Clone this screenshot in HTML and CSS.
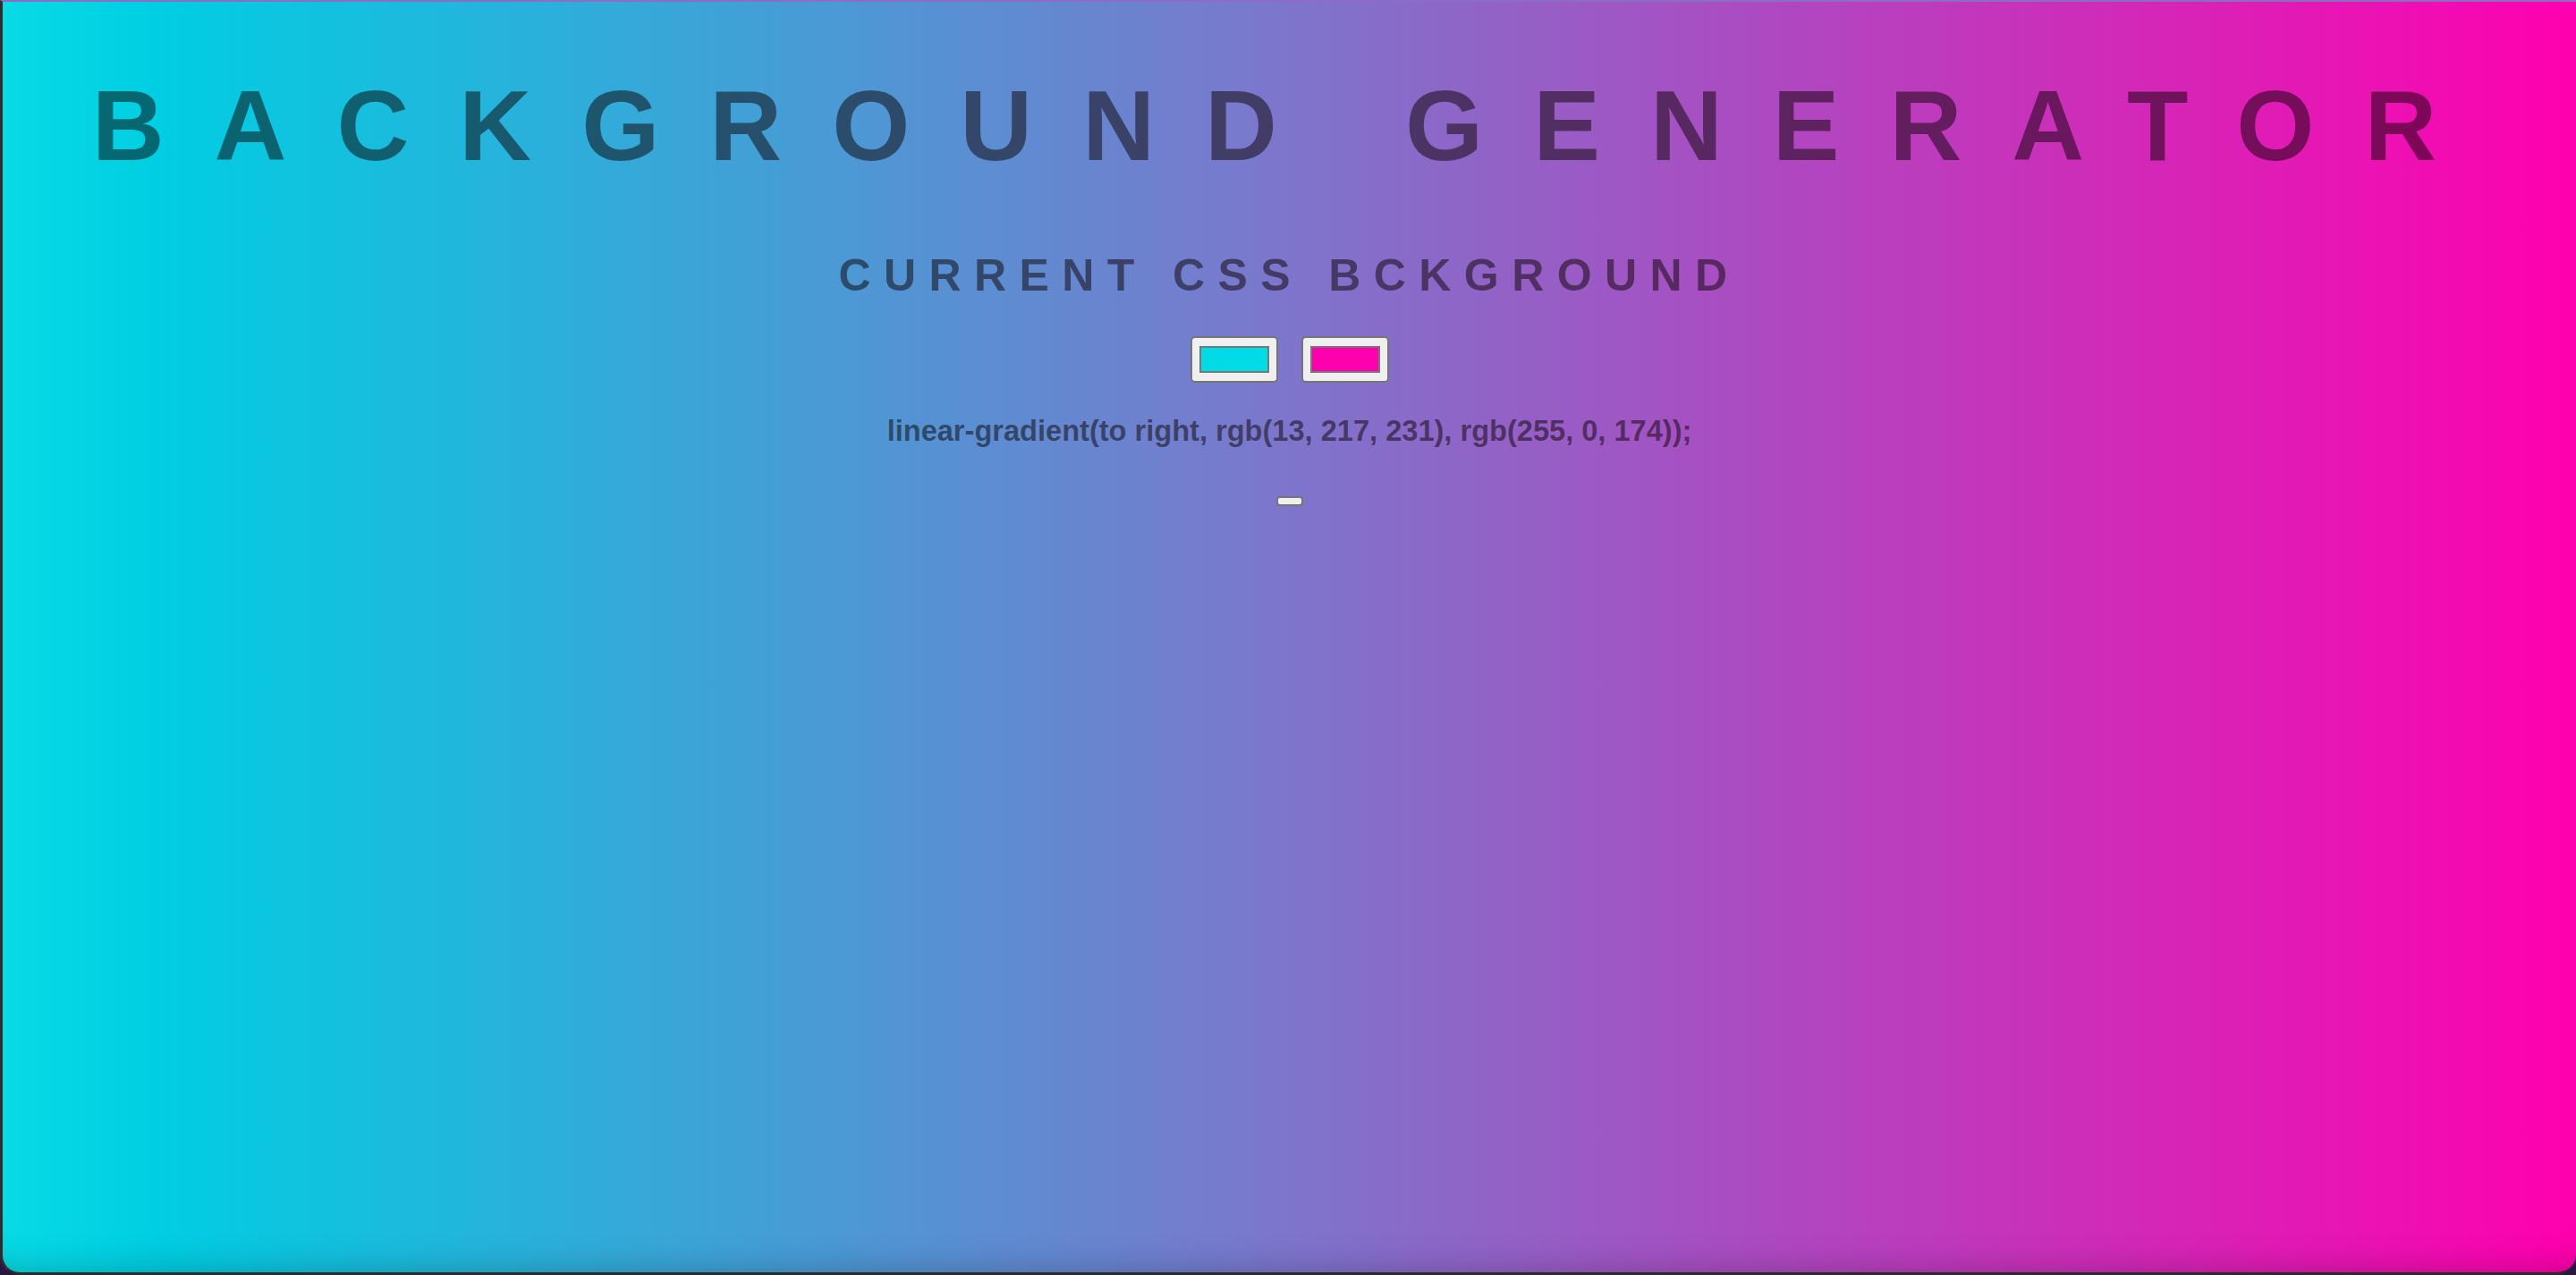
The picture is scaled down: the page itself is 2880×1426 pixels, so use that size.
FILE: index.html
```html
<!DOCTYPE html>
<html lang="en">
<head>
<meta charset="utf-8">
<title>Background Generator</title>
<link rel="stylesheet" href="styles.css">
</head>
<body>
<div class="window">
  <h1 class="title">BACKGROUND GENERATOR</h1>
  <h3 class="subtitle">CURRENT CSS BCKGROUND</h3>
  <div class="pickers">
    <span class="picker"><span class="swatch swatch-1"></span></span>
    <span class="picker"><span class="swatch swatch-2"></span></span>
  </div>
  <p class="css-output">linear-gradient(to right, rgb(13, 217, 231), rgb(255, 0, 174));</p>
  <div class="actions"><button class="random-btn" type="button"></button></div>
</div>
</body>
</html>
```
FILE: styles.css
```css
html, body {
  margin: 0;
  padding: 0;
  height: 100%;
  background: #2a1640;
}

.window {
  box-sizing: border-box;
  height: 1426px;
  border-top: 2px solid #8c6cc4;
  border-left: 3px solid #2d2d2d;
  border-bottom: 3px solid #2b2b2b;
  border-radius: 0 0 22px 22px;
  background: linear-gradient(to right, rgb(8, 218, 230) 0%, rgb(0, 206, 226) 6%, rgb(120, 122, 205) 48%, rgb(255, 0, 174) 100%);
  box-shadow: inset 0 -40px 40px -40px rgba(0, 0, 0, 0.25);
  font-family: "Liberation Sans", Arial, Helvetica, sans-serif;
  font-weight: bold;
  color: rgba(10, 0, 0, 0.5);
  text-align: center;
  display: flex;
  flex-direction: column;
  align-items: center;
  overflow: hidden;
}

.title {
  margin: 83px 0 0 0;
  font-size: 112px;
  line-height: 112px;
  letter-spacing: 56px;
  font-weight: bold;
}

.subtitle {
  margin: 86px 0 0 0;
  font-size: 50px;
  line-height: 50px;
  letter-spacing: 14.4px;
  font-weight: bold;
}

.pickers {
  margin-top: 43px;
  display: flex;
  gap: 26px;
}

.picker {
  box-sizing: border-box;
  width: 98px;
  height: 52px;
  padding: 9px 8px;
  background: #efefef;
  border: 2px solid #767676;
  border-radius: 5px;
  display: flex;
}

.swatch {
  flex: 1;
  border: 2px solid #777777;
}

.swatch-1 { background: rgb(0, 219, 230); }
.swatch-2 { background: rgb(255, 0, 174); }

.css-output {
  margin: 38px 0 0 0;
  font-size: 32.6px;
  line-height: 32.6px;
  letter-spacing: 0;
}

.actions {
  margin-top: 56px;
}

.random-btn {
  display: block;
  box-sizing: border-box;
  width: 30px;
  height: 11px;
  padding: 0;
  background: #efefef;
  border: 2px solid #767676;
  border-radius: 4px;
}
```
